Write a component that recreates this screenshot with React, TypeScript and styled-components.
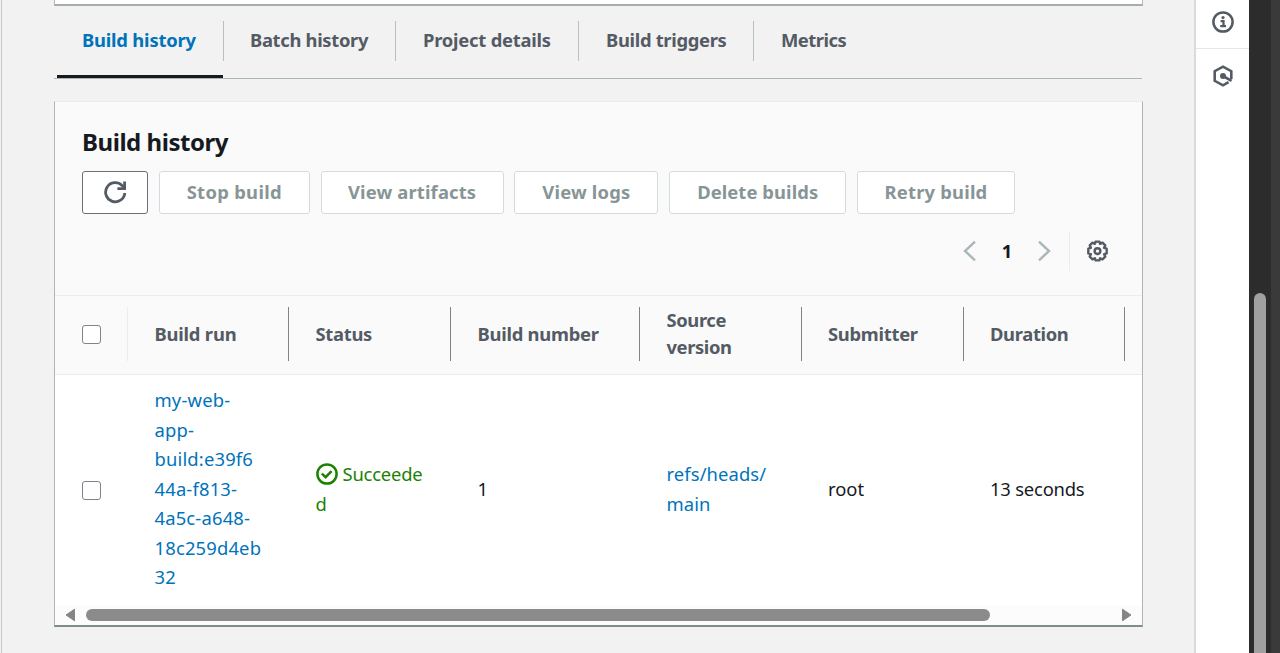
import React from 'react';
import styled, { createGlobalStyle, css } from 'styled-components';

const GlobalStyle = createGlobalStyle`
  * { box-sizing: border-box; }
  html, body { margin: 0; padding: 0; overflow: hidden; }
  body {
    font-family: 'Noto Sans', 'Open Sans', sans-serif;
    font-size: 18.4px;
    color: #16191f;
    background: #f2f2f2;
  }
`;

const Shell = styled.div`
  display: flex;
  width: 1280px;
  height: 653px;
  overflow: hidden;
  background: #f2f2f2;
`;

const LeftEdge = styled.div`
  width: 3px;
  border-right: 1px solid #c3cacd;
  margin-left: -1px;
  flex: none;
`;

const Main = styled.main`
  flex: 1;
  min-width: 0;
  padding: 0 51px 0 52px;
  display: flex;
  flex-direction: column;
`;

const panelEdge = css`
  border: 1px solid #b0b6b8;
  border-top-color: #eaeded;
  border-bottom: 2px solid #7f8c8e;
`;

const PreviousPanel = styled.div`
  ${panelEdge}
  height: 6px;
  flex: none;
  border-top: 0;
  border-bottom-color: #a5adae;
  background: #fff;
`;

const TabBar = styled.nav`
  display: flex;
  height: 73px;
  flex: none;
  padding: 15px 0 0 3px;
  border-bottom: 1px solid #aab7b8;
  margin-right: 1px;
`;

const Tab = styled.div<{ $active?: boolean; $width: number }>`
  width: ${p => p.$width}px;
  height: 57px;
  border-bottom: ${p => (p.$active ? '3px solid #16191f' : '3px solid transparent')};
  color: ${p => (p.$active ? '#0073bb' : '#545b64')};
`;

const TabLabel = styled.div<{ $first?: boolean; $last?: boolean; $track?: number }>`
  height: 40px;
  padding-left: ${p => (p.$first ? 25 : 27)}px;
  margin-right: ${p => (p.$first ? -1 : 0)}px;
  line-height: 38px;
  font-weight: 700;
  white-space: nowrap;
  letter-spacing: ${p => p.$track ?? 0}px;
  border-right: ${p => (p.$last ? '0' : '1px solid #b7c0c2')};
`;

const Panel = styled.section`
  ${panelEdge}
  margin-top: 22px;
  height: 526px;
  flex: none;
  background: #fff;
  display: flex;
  flex-direction: column;
  overflow: hidden;
`;

const PanelHeader = styled.header`
  height: 193px;
  flex: none;
  background: #fafafa;
  padding: 24px 27px 0;
`;

const Title = styled.h2`
  margin: 0;
  height: 45px;
  line-height: 32px;
  font-size: 24px;
  font-weight: 700;
  letter-spacing: -0.45px;
  white-space: nowrap;
`;

const Actions = styled.div`
  display: flex;
  gap: 10.8px;
`;

const Button = styled.button<{ $width: number; $enabled?: boolean; $track?: number }>`
  width: ${p => p.$width}px;
  height: 43px;
  padding: 0 0 2px;
  display: flex;
  align-items: center;
  justify-content: center;
  font: inherit;
  font-weight: 700;
  white-space: nowrap;
  letter-spacing: ${p => p.$track ?? 0}px;
  color: ${p => (p.$enabled ? '#545b64' : '#879596')};
  background: #fff;
  border: 1px solid ${p => (p.$enabled ? '#687078' : '#d5dbdb')};
  border-radius: 3px;
`;

const Paging = styled.div`
  display: flex;
  justify-content: flex-end;
  align-items: center;
  height: 40px;
  margin-top: 17px;
  padding-right: 6px;
`;

const PageNumber = styled.span`
  width: 60px;
  padding-bottom: 2px;
  text-align: center;
  font-weight: 700;
`;

const Settings = styled.div`
  height: 40px;
  margin-left: 18px;
  padding-left: 16px;
  display: flex;
  align-items: center;
  border-left: 1px solid #eaeded;
`;

const columns = '73px 161px 162px 189px 161.5px 162px 161.5px 1fr';

const HeadRow = styled.div`
  display: grid;
  grid-template-columns: ${columns};
  height: 80px;
  flex: none;
  align-items: center;
  padding-bottom: 2px;
  background: #fafafa;
  border-top: 1px solid #eaeded;
  border-bottom: 1px solid #eaeded;
`;

const HeadCell = styled.div<{ $light?: boolean; $track?: number }>`
  height: 54px;
  padding: 0 0 ${p => (p.$light ? 0 : 2)}px ${p => (p.$light ? 27 : 26.5)}px;
  display: flex;
  align-items: center;
  line-height: 27px;
  font-weight: 700;
  letter-spacing: ${p => p.$track ?? 0}px;
  color: #545b64;
  border-right: 1px solid ${p => (p.$light ? '#eaeded' : '#7d848a')};
`;

const Row = styled.div`
  display: grid;
  grid-template-columns: ${columns};
  height: 230px;
  flex: none;
  align-items: center;
`;

const Cell = styled.div<{ $tone?: string; $track?: number; $select?: boolean }>`
  padding: 0 0 ${p => (p.$select ? 0 : 3)}px ${p => (p.$select ? 27 : 26.5)}px;
  line-height: 29.6px;
  white-space: nowrap;
  letter-spacing: ${p => p.$track ?? 0}px;
  color: ${p => p.$tone ?? '#16191f'};
`;

const StatusLine = styled.div`
  display: flex;
  align-items: center;
  gap: 5px;
`;

const Checkbox = styled.span`
  display: block;
  width: 19px;
  height: 19px;
  border: 1.5px solid #7d848b;
  border-radius: 3px;
  background: #fff;
`;

const ScrollBar = styled.div`
  display: flex;
  align-items: center;
  height: 20px;
  flex: none;
  padding: 0 10px;
  background: #fcfcfc;
`;

const ScrollTrack = styled.div`
  flex: 1;
  padding: 0 11px;
`;

const ScrollThumb = styled.div`
  width: 904px;
  height: 12px;
  border-radius: 6px;
  background: #8b8b8b;
`;

const SidePanel = styled.aside`
  width: 55px;
  flex: none;
  border-left: 2px solid #d9dcdd;
  background: #fff;
`;

const SideItem = styled.div<{ $height: number; $top: number }>`
  height: ${p => p.$height}px;
  padding-top: ${p => p.$top}px;
  display: flex;
  justify-content: center;
  border-bottom: 1px solid #e4e7e7;
  &:last-child { border-bottom: 0; }
`;

const WindowScroll = styled.div`
  width: 22px;
  flex: none;
  padding: 293px 5px 0;
  background: #2c2c2c;
`;

const WindowThumb = styled.div`
  height: 380px;
  border-radius: 6px;
  background: #a0a0a0;
`;

const WindowEdge = styled.div`
  width: 9px;
  flex: none;
  background: #3a3a3a;
`;

const InfoIcon = () => (
  <svg width="22" height="22" viewBox="0 0 22 22" fill="none" stroke="#545b64">
    <circle cx="11" cy="11" r="9.6" strokeWidth="2.5" />
    <circle cx="11" cy="6.6" r="1.6" fill="#545b64" stroke="none" />
    <path d="M8.6 10.200h2.900v4.600M8.200 15.200h5.800" strokeWidth="2.300" />
  </svg>
);

const HexIcon = () => (
  <svg width="22" height="22" viewBox="0 0 22 22" fill="none" stroke="#545b64" strokeWidth="2.6">
    <path d="M19.300 14V6.200L11 1.700 2.700 6.200v9.600L11 20.300l5.600-3.100" />
    <circle cx="11" cy="11" r="3" fill="#545b64" stroke="none" />
    <path d="M11 11l8.600 4.800" />
  </svg>
);

const RefreshIcon = () => (
  <svg width="24" height="24" viewBox="0 0 24 24" fill="none" stroke="#545b64" strokeWidth="2.8">
    <path d="M21.800 13a9.600 9.600 0 1 1-2.800-7.600L21 7.500" />
    <path d="M21.600 1.600v7h-7.200" />
  </svg>
);

const Chevron = ({ right }: { right?: boolean }) => (
  <svg width="14" height="22" viewBox="0 0 14 22" fill="none" stroke="#aab7b8" strokeWidth="2.4">
    <path d={right ? 'M2 1.7l10 9.3-10 9.3' : 'M12 1.7L2 11l10 9.3'} />
  </svg>
);

const GearIcon = () => (
  <svg width="23" height="23" viewBox="0 0 24 24" fill="none" stroke="#545b64" strokeWidth="2.5" strokeLinejoin="round">
    <path d="M10 1.7h4l.7 2.3 2.5-1.2 2.9 2.9-1.2 2.5 2.7.8v5l-2.7.8 1.2 2.5-2.9 2.9-2.5-1.2-.7 2.3h-4L9.300 19l-2.500 1.200-2.900-2.900 1.200-2.500-2.700-.8V9l2.700-.8-1.200-2.500 2.900-2.900L9.300 4z" />
    <circle cx="12" cy="11.600" r="3" />
  </svg>
);

const SuccessIcon = () => (
  <svg width="22" height="22" viewBox="0 0 22 22" fill="none" stroke="#1d8102" strokeWidth="2.5">
    <circle cx="11" cy="11" r="9.6" />
    <path d="M5.900 10.700l3.700 3.500 6-6" />
  </svg>
);

const Arrow = ({ right }: { right?: boolean }) => (
  <svg width="10" height="14" viewBox="0 0 10 14" fill="#858585" stroke="#858585" strokeLinejoin="round">
    <path d={right ? 'M.5 1.200v11.600L9 7z' : 'M9.500 1.200v11.600L1 7z'} />
  </svg>
);

const link = '#0073bb';
const runLines = ['my-web-', 'app-', 'build:e39f6', '44a-f813-', '4a5c-a648-', '18c259d4eb', '32'];

export default function App() {
  return (
    <Shell>
      <GlobalStyle />
      <LeftEdge />
      <Main>
        <PreviousPanel />
        <TabBar>
          <Tab $active $width={166}><TabLabel $first $track={-0.2}>Build history</TabLabel></Tab>
          <Tab $width={173}><TabLabel $track={-0.32}>Batch history</TabLabel></Tab>
          <Tab $width={183}><TabLabel $track={-0.23}>Project details</TabLabel></Tab>
          <Tab $width={175}><TabLabel $track={-0.32}>Build triggers</TabLabel></Tab>
          <Tab $width={120}><TabLabel $last $track={-0.5}>Metrics</TabLabel></Tab>
        </TabBar>
        <Panel>
          <PanelHeader>
            <Title>Build history</Title>
            <Actions>
              <Button $width={66} $enabled aria-label="Refresh"><RefreshIcon /></Button>
              <Button $width={151} $track={0.3}>Stop build</Button>
              <Button $width={183} $track={0.15}>View artifacts</Button>
              <Button $width={144} $track={0.2}>View logs</Button>
              <Button $width={177} $track={0.08}>Delete builds</Button>
              <Button $width={158} $track={0.2}>Retry build</Button>
            </Actions>
            <Paging>
              <Chevron />
              <PageNumber>1</PageNumber>
              <Chevron right />
              <Settings><GearIcon /></Settings>
            </Paging>
          </PanelHeader>
          <HeadRow>
            <HeadCell $light><Checkbox /></HeadCell>
            <HeadCell $track={-0.2}>Build run</HeadCell>
            <HeadCell $track={-0.3}>Status</HeadCell>
            <HeadCell $track={-0.25}>Build number</HeadCell>
            <HeadCell $track={-0.4}>Source<br />version</HeadCell>
            <HeadCell $track={-0.28}>Submitter</HeadCell>
            <HeadCell $track={-0.35}>Duration</HeadCell>
          </HeadRow>
          <Row>
            <Cell $select><Checkbox /></Cell>
            <Cell $tone={link} $track={0.17}>{runLines.map(l => <div key={l}>{l}</div>)}</Cell>
            <Cell $tone="#1d8102" $track={-0.2}><StatusLine><SuccessIcon />Succeede</StatusLine>d</Cell>
            <Cell>1</Cell>
            <Cell $tone={link} $track={0.1}>refs/heads/<br />main</Cell>
            <Cell>root</Cell>
            <Cell $track={-0.2}>13 seconds</Cell>
          </Row>
          <ScrollBar>
            <Arrow />
            <ScrollTrack><ScrollThumb /></ScrollTrack>
            <Arrow right />
          </ScrollBar>
        </Panel>
      </Main>
      <SidePanel>
        <SideItem $height={49} $top={11}><InfoIcon /></SideItem>
        <SideItem $height={60} $top={16}><HexIcon /></SideItem>
      </SidePanel>
      <WindowScroll><WindowThumb /></WindowScroll>
      <WindowEdge />
    </Shell>
  );
}
